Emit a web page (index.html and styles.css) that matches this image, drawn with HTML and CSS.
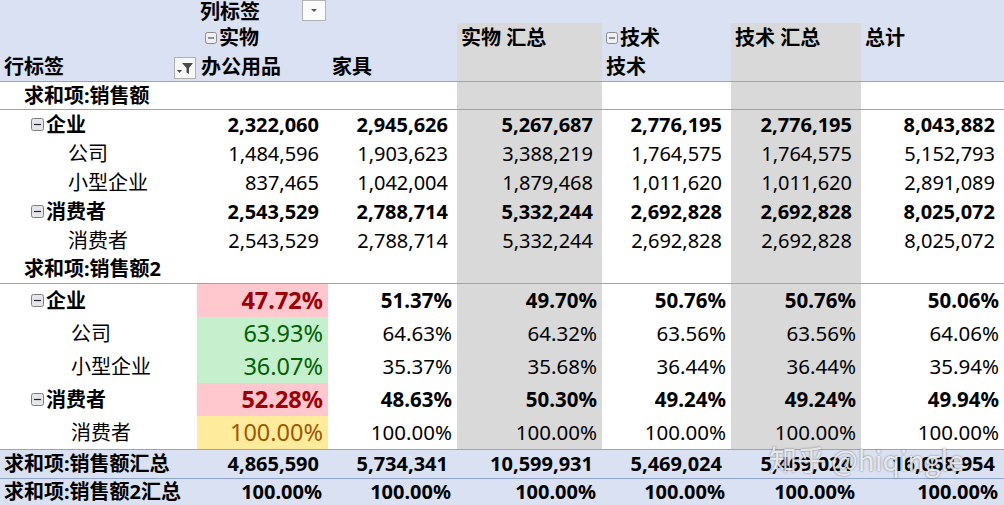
FILE: index.html
```html
<!DOCTYPE html>
<html lang="zh-CN">
<head>
<meta charset="utf-8">
<title>数据透视表</title>
<link rel="stylesheet" href="styles.css">
</head>
<body>
<div class="sheet">
  <div class="row hdr h1">
    <div class="c"></div>
    <div class="c b collab"><span class="cl">列标签</span>
      <span class="dd"><svg width="24" height="21" viewBox="0 0 24 21"><rect x="0.5" y="0.5" width="23" height="20" fill="#fbfbfb" stroke="#b4b4b4"/><path d="M9 9 L15 9 L12 12 Z" fill="#555"/></svg></span>
    </div>
    <div class="c"></div><div class="c"></div><div class="c"></div><div class="c"></div><div class="c"></div>
  </div>
  <div class="row hdr h2">
    <div class="c"></div>
    <div class="c b ind-h"><svg class="mi" width="12" height="12" viewBox="0 0 12 12"><rect x="0.5" y="0.5" width="11" height="11" rx="2" fill="#eef0f5" stroke="#8d8d8d"/><path d="M3 6 H9" stroke="#333" stroke-width="1"/></svg>实物</div>
    <div class="c"></div>
    <div class="c g b">实物 汇总</div>
    <div class="c b"><svg class="mi" width="12" height="12" viewBox="0 0 12 12"><rect x="0.5" y="0.5" width="11" height="11" rx="2" fill="#eef0f5" stroke="#8d8d8d"/><path d="M3 6 H9" stroke="#333" stroke-width="1"/></svg>技术</div>
    <div class="c g b">技术 汇总</div>
    <div class="c b">总计</div>
  </div>
  <div class="row hdr h3 line">
    <div class="c b rowlab"><span>行标签</span>
      <span class="fb"><svg width="22" height="22" viewBox="0 0 22 22"><rect x="0.5" y="0.5" width="21" height="21" fill="#f7f7f7" stroke="#b0b0b0"/><path d="M8 6 H19 L15 11 V17 L12.5 15.5 V11 Z" fill="#4a4a4a"/><path d="M3 13 H8 L5.5 16 Z" fill="#4a4a4a"/></svg></span>
    </div>
    <div class="c b">办公用品</div>
    <div class="c b">家具</div>
    <div class="c g"></div>
    <div class="c b">技术</div>
    <div class="c g"></div>
    <div class="c"></div>
  </div>

  <div class="row r28 line">
    <div class="c b l1">求和项:销售额</div>
    <div class="c"></div><div class="c"></div><div class="c g"></div><div class="c"></div><div class="c g"></div><div class="c"></div>
  </div>

  <div class="row r29 b">
    <div class="c l2"><svg class="mi" width="13" height="13" viewBox="0 0 13 13"><rect x="0.5" y="0.5" width="12" height="12" rx="2" fill="#e4e6ea" stroke="#7e7e7e"/><path d="M3 6.5 H10" stroke="#222" stroke-width="1.2"/></svg>企业</div>
    <div class="c n">2,322,060</div><div class="c n">2,945,626</div><div class="c n g">5,267,687</div><div class="c n">2,776,195</div><div class="c n g">2,776,195</div><div class="c n">8,043,882</div>
  </div>
  <div class="row r29">
    <div class="c l3">公司</div>
    <div class="c n">1,484,596</div><div class="c n">1,903,623</div><div class="c n g">3,388,219</div><div class="c n">1,764,575</div><div class="c n g">1,764,575</div><div class="c n">5,152,793</div>
  </div>
  <div class="row r29">
    <div class="c l3">小型企业</div>
    <div class="c n">837,465</div><div class="c n">1,042,004</div><div class="c n g">1,879,468</div><div class="c n">1,011,620</div><div class="c n g">1,011,620</div><div class="c n">2,891,089</div>
  </div>
  <div class="row r29 b">
    <div class="c l2"><svg class="mi" width="13" height="13" viewBox="0 0 13 13"><rect x="0.5" y="0.5" width="12" height="12" rx="2" fill="#e4e6ea" stroke="#7e7e7e"/><path d="M3 6.5 H10" stroke="#222" stroke-width="1.2"/></svg>消费者</div>
    <div class="c n">2,543,529</div><div class="c n">2,788,714</div><div class="c n g">5,332,244</div><div class="c n">2,692,828</div><div class="c n g">2,692,828</div><div class="c n">8,025,072</div>
  </div>
  <div class="row r29">
    <div class="c l3">消费者</div>
    <div class="c n">2,543,529</div><div class="c n">2,788,714</div><div class="c n g">5,332,244</div><div class="c n">2,692,828</div><div class="c n g">2,692,828</div><div class="c n">8,025,072</div>
  </div>

  <div class="row r29 line">
    <div class="c b l1">求和项:销售额2</div>
    <div class="c"></div><div class="c"></div><div class="c g"></div><div class="c"></div><div class="c g"></div><div class="c"></div>
  </div>

  <div class="row r33 pct b">
    <div class="c l2"><svg class="mi" width="13" height="13" viewBox="0 0 13 13"><rect x="0.5" y="0.5" width="12" height="12" rx="2" fill="#e4e6ea" stroke="#7e7e7e"/><path d="M3 6.5 H10" stroke="#222" stroke-width="1.2"/></svg>企业</div>
    <div class="c n hl bad">47.72%</div><div class="c n">51.37%</div><div class="c n g">49.70%</div><div class="c n">50.76%</div><div class="c n g">50.76%</div><div class="c n">50.06%</div>
  </div>
  <div class="row r33 pct">
    <div class="c l3p">公司</div>
    <div class="c n hl good">63.93%</div><div class="c n">64.63%</div><div class="c n g">64.32%</div><div class="c n">63.56%</div><div class="c n g">63.56%</div><div class="c n">64.06%</div>
  </div>
  <div class="row r33 pct">
    <div class="c l3p">小型企业</div>
    <div class="c n hl good">36.07%</div><div class="c n">35.37%</div><div class="c n g">35.68%</div><div class="c n">36.44%</div><div class="c n g">36.44%</div><div class="c n">35.94%</div>
  </div>
  <div class="row r33 pct b">
    <div class="c l2"><svg class="mi" width="13" height="13" viewBox="0 0 13 13"><rect x="0.5" y="0.5" width="12" height="12" rx="2" fill="#e4e6ea" stroke="#7e7e7e"/><path d="M3 6.5 H10" stroke="#222" stroke-width="1.2"/></svg>消费者</div>
    <div class="c n hl bad">52.28%</div><div class="c n">48.63%</div><div class="c n g">50.30%</div><div class="c n">49.24%</div><div class="c n g">49.24%</div><div class="c n">49.94%</div>
  </div>
  <div class="row r33 pct">
    <div class="c l3p">消费者</div>
    <div class="c n hl neutral">100.00%</div><div class="c n">100.00%</div><div class="c n g">100.00%</div><div class="c n">100.00%</div><div class="c n g">100.00%</div><div class="c n">100.00%</div>
  </div>

  <div class="row hdr tot r29 b topline">
    <div class="c l0">求和项:销售额汇总</div>
    <div class="c n">4,865,590</div><div class="c n">5,734,341</div><div class="c n">10,599,931</div><div class="c n">5,469,024</div><div class="c n">5,469,024</div><div class="c n">16,068,954</div>
  </div>
  <div class="row hdr tot r27 b topline">
    <div class="c l0">求和项:销售额2汇总</div>
    <div class="c n">100.00%</div><div class="c n">100.00%</div><div class="c n">100.00%</div><div class="c n">100.00%</div><div class="c n">100.00%</div><div class="c n">100.00%</div>
  </div>

  <div class="wm">知乎 @hiqingle</div>
</div>
</body>
</html>
```

FILE: styles.css
```css
html, body {
  margin: 0;
  padding: 0;
  background: #ffffff;
}
body {
  width: 1004px;
  height: 505px;
  overflow: hidden;
  font-family: "Noto Sans", "Noto Sans CJK SC", sans-serif;
  font-size: 20px;
  color: #000;
}
.sheet {
  position: relative;
  width: 1004px;
  height: 505px;
  overflow: hidden;
}
.row {
  display: grid;
  grid-template-columns: 197px 131px 129px 145px 129px 130px 143px;
  box-sizing: border-box;
}
.hdr { background: #d9e1f2; }
.h1 { height: 23px; }
.h2 { height: 29px; }
.h3 { height: 30px; }
.r28 { height: 28px; }
.r29 { height: 29px; }
.r33 { height: 33px; }
.r27 { height: 27px; }
.line { border-bottom: 1px solid #8fa5cf; }
.topline { border-top: 1px solid #8fa5cf; }

.c {
  display: flex;
  align-items: center;
  padding: 0 4px;
  white-space: nowrap;
  overflow: visible;
  min-width: 0;
  line-height: 1;
}
.b { font-weight: 700; }
.g { background: #d9d9d9; }
.n {
  justify-content: flex-end;
  padding-right: 9px;
}
.pct { font-size: 20.5px; }
.pct .n { padding-right: 5px; }
.pct .n.hl { font-size: 23.5px; padding-right: 5px; }
.pct .c.l2, .pct .c.l3p { font-size: 20px; }
.tot .n { padding-right: 9px; }
.r27 .n { padding-right: 6px; }

.collab {
  justify-content: space-between;
  padding-left: 3px;
  padding-right: 2px;
}
.cl { line-height: 22px; padding-top: 1px; }
.dd { display: block; height: 21px; align-self: flex-start; }
.dd svg, .fb svg { display: block; }

.rowlab {
  justify-content: space-between;
  padding-right: 1px;
}
.fb { display: block; margin-top: 2px; }

.ind-h { padding-left: 8px; }
.mi { margin-right: 2px; flex: none; }

.l0 { padding-left: 4px; }
.l1 { padding-left: 24px; }
.l2 { padding-left: 31px; }
.l3 { padding-left: 68px; }
.l3p { padding-left: 71px; }

.bad { background: #ffc7ce; color: #9c0006; }
.good { background: #c6efce; color: #006100; }
.neutral { background: #ffeb9c; color: #9c5700; }

.wm {
  position: absolute;
  left: 769px;
  top: 445px;
  font-family: "Noto Sans CJK SC", "Noto Sans", sans-serif;
  font-size: 28px;
  line-height: 1;
  color: rgba(255, 255, 255, 0.82);
  text-shadow: 0 0 2px rgba(60, 60, 60, 0.7);
  white-space: nowrap;
  pointer-events: none;
}
```
